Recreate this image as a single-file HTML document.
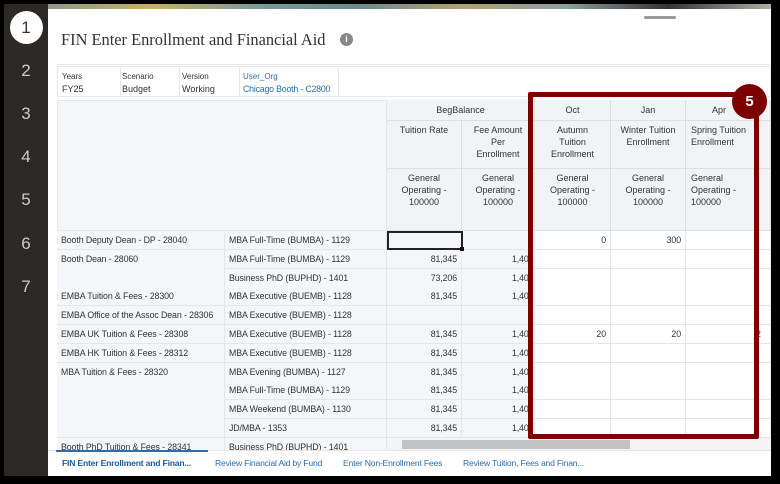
<!DOCTYPE html>
<html><head><style>
*{margin:0;padding:0;box-sizing:border-box}
body{width:780px;height:484px;background:#fff;position:relative;overflow:hidden;font-family:"Liberation Sans",sans-serif;font-size:9px;color:#333}
.a{position:absolute}
.num{position:absolute;left:0;width:48px;text-align:center;color:#cfcac4;font-size:17px}
.c{position:absolute;white-space:nowrap;overflow:hidden}
.hd{background:#f1f3f6;border-right:1px solid #dcdfe4;border-bottom:1px solid #dcdfe4;text-align:center;color:#333;font-size:9px;line-height:12px}
.cell{border-right:1px solid #e3e6ea;border-bottom:1px solid #e3e6ea;height:19px;line-height:18px;padding:0 4px;font-size:8.8px;letter-spacing:-0.1px}
.g{background:#f4f6f9}
.w{background:#fff}
.r{text-align:right}
</style></head><body>
<div class="a" style="left:0;top:0;width:780px;height:484px;background:#000"></div>
<div class="a" style="left:4px;top:4px;width:44px;height:472px;background:#2d2926"></div>
<div class="num" style="left:4px;top:11px;width:44px"><div style="margin:0 auto;width:33px;height:33px;border-radius:50%;background:#fff;color:#333;line-height:33px">1</div></div>
<div class="num" style="left:4px;top:61px;width:44px">2</div>
<div class="num" style="left:4px;top:104px;width:44px">3</div>
<div class="num" style="left:4px;top:147px;width:44px">4</div>
<div class="num" style="left:4px;top:190px;width:44px">5</div>
<div class="num" style="left:4px;top:234px;width:44px">6</div>
<div class="num" style="left:4px;top:277px;width:44px">7</div>
<div class="a" style="left:48px;top:4px;width:723px;height:472px;background:#fff"></div>
<div class="a" style="left:48px;top:4px;width:723px;height:5px;background:linear-gradient(90deg,#8a9a8a,#c8b060,#7a9a9a,#6a8a90,#b0a070,#8aa0a0,#333,#aab0a0)"></div>
<div class="a" style="left:644px;top:16px;width:32px;height:3px;border-radius:2px;background:#999"></div>
<div class="a" style="left:61px;top:30px;font-family:'Liberation Serif',serif;font-size:16.4px;color:#333">FIN Enter Enrollment and Financial Aid</div>
<div class="a" style="left:340px;top:33px;width:13px;height:13px;border-radius:50%;background:#888;color:#fff;font-size:9px;font-weight:bold;text-align:center;line-height:13px">i</div>
<div class="a" style="left:57px;top:64px;width:714px;height:1px;background:#e3e6ea"></div>
<div class="a" style="left:57px;top:66px;width:714px;height:31px;border:1px solid #e3e6ea"></div>
<div class="a" style="left:62px;top:71px;font-size:8px;line-height:12px">Years<br><span style="font-size:9px">FY25</span></div>
<div class="a" style="left:120px;top:67px;width:1px;height:29px;background:#e3e6ea"></div>
<div class="a" style="left:122px;top:71px;font-size:8px;line-height:12px">Scenario<br><span style="font-size:9px">Budget</span></div>
<div class="a" style="left:179px;top:67px;width:1px;height:29px;background:#e3e6ea"></div>
<div class="a" style="left:182px;top:71px;font-size:8px;line-height:12px">Version<br><span style="font-size:9px">Working</span></div>
<div class="a" style="left:239px;top:67px;width:1px;height:29px;background:#e3e6ea"></div>
<div class="a" style="left:243px;top:71px;font-size:8px;line-height:12px;color:#2a6fa8">User_Org<br><span style="font-size:8.8px;letter-spacing:-0.2px">Chicago Booth - C2800</span></div>
<div class="a" style="left:338px;top:67px;width:1px;height:29px;background:#e3e6ea"></div>
<div class="a" style="left:57px;top:100px;width:330px;height:131px;background:#f4f6f9;border:1px solid #e3e6ea"></div>
<div class="c hd" style="left:387px;top:100px;width:148px;height:21px;line-height:20px">BegBalance</div>
<div class="c hd" style="left:535px;top:100px;width:76px;height:21px;line-height:20px">Oct</div>
<div class="c hd" style="left:611px;top:100px;width:75px;height:21px;line-height:20px">Jan</div>
<div class="c hd" style="left:686px;top:100px;width:85px;height:21px;line-height:20px;text-align:left;padding-left:26px">Apr</div>
<div class="c hd" style="left:387px;top:121px;width:75px;height:48px;padding-top:3px">Tuition Rate</div>
<div class="c hd" style="left:462px;top:121px;width:73px;height:48px;padding-top:3px">Fee Amount<br>Per<br>Enrollment</div>
<div class="c hd" style="left:535px;top:121px;width:76px;height:48px;padding-top:3px">Autumn<br>Tuition<br>Enrollment</div>
<div class="c hd" style="left:611px;top:121px;width:75px;height:48px;padding-top:3px">Winter Tuition<br>Enrollment</div>
<div class="c hd" style="left:686px;top:121px;width:85px;height:48px;padding-top:3px;text-align:left;padding-left:5px">Spring Tuition<br>Enrollment</div>
<div class="c hd" style="left:387px;top:169px;width:75px;height:62px;padding-top:3px">General<br>Operating -<br>100000</div>
<div class="c hd" style="left:462px;top:169px;width:73px;height:62px;padding-top:3px">General<br>Operating -<br>100000</div>
<div class="c hd" style="left:535px;top:169px;width:76px;height:62px;padding-top:3px">General<br>Operating -<br>100000</div>
<div class="c hd" style="left:611px;top:169px;width:75px;height:62px;padding-top:3px">General<br>Operating -<br>100000</div>
<div class="c hd" style="left:686px;top:169px;width:85px;height:62px;padding-top:3px;text-align:left;padding-left:5px">General<br>Operating -<br>100000</div>
<div id="rows"></div>
<script>
var rows=[
["Booth Deputy Dean - DP - 28040","MBA Full-Time (BUMBA) - 1129","","","0","300"],
["Booth Dean - 28060","MBA Full-Time (BUMBA) - 1129","81,345","1,40","",""],
["","Business PhD (BUPHD) - 1401","73,206","1,40","",""],
["EMBA Tuition & Fees - 28300","MBA Executive (BUEMB) - 1128","81,345","1,40","",""],
["EMBA Office of the Assoc Dean - 28306","MBA Executive (BUEMB) - 1128","","","",""],
["EMBA UK Tuition & Fees - 28308","MBA Executive (BUEMB) - 1128","81,345","1,40","20","20"],
["EMBA HK Tuition & Fees - 28312","MBA Executive (BUEMB) - 1128","81,345","1,40","",""],
["MBA Tuition & Fees - 28320","MBA Evening (BUMBA) - 1127","81,345","1,40","",""],
["","MBA Full-Time (BUMBA) - 1129","81,345","1,40","",""],
["","MBA Weekend (BUMBA) - 1130","81,345","1,40","",""],
["","JD/MBA - 1353","81,345","1,40","",""],
["Booth PhD Tuition & Fees - 28341","Business PhD (BUPHD) - 1401","","","",""]];
var h="";
for(var i=0;i<rows.length;i++){var t=231+i*18.8,r=rows[i];
h+='<div class="c cell g" style="left:57px;top:'+t+'px;width:168px;overflow:visible;'+(i+1<rows.length&&rows[i+1][0]==""?"border-bottom-color:#f4f6f9;":"")+'">'+r[0]+'</div>';
h+='<div class="c cell g" style="left:225px;top:'+t+'px;width:162px">'+r[1]+'</div>';
h+='<div class="c cell g r" style="left:387px;top:'+t+'px;width:75px">'+r[2]+'</div>';
h+='<div class="c cell g" style="left:462px;top:'+t+'px;width:73px;padding-left:50px">'+r[3]+'</div>';
h+='<div class="c cell w r" style="left:535px;top:'+t+'px;width:76px">'+r[4]+'</div>';
h+='<div class="c cell w r" style="left:611px;top:'+t+'px;width:75px">'+r[5]+'</div>';
h+='<div class="c cell w" style="left:686px;top:'+t+'px;width:85px;padding-left:70px">'+(r[4]=="20"?"2":"")+'</div>';}
document.getElementById("rows").innerHTML=h;
</script>
<div class="a" style="left:387px;top:231px;width:76px;height:19px;border:2px solid #222"></div>
<div class="a" style="left:460px;top:247px;width:4px;height:4px;background:#111"></div>
<div class="a" style="left:387px;top:438px;width:384px;height:12px;background:#f4f4f4"></div>
<div class="a" style="left:402px;top:440px;width:228px;height:9px;background:#c2c2c2"></div>
<div class="a" style="left:48px;top:450px;width:723px;height:26px;background:#fff;border-top:1px solid #e3e6ea"></div>
<div class="a" style="left:56px;top:450px;width:152px;height:2px;background:#2a6fa8"></div>
<div class="a" style="left:62px;top:458px;font-size:8.6px;font-weight:bold;color:#1e5b94;letter-spacing:-0.2px">FIN Enter Enrollment and Finan...</div>
<div class="a" style="left:215px;top:458px;font-size:8.6px;color:#2a6fa8;letter-spacing:-0.2px">Review Financial Aid by Fund</div>
<div class="a" style="left:343px;top:458px;font-size:8.6px;color:#2a6fa8;letter-spacing:-0.2px">Enter Non-Enrollment Fees</div>
<div class="a" style="left:463px;top:458px;font-size:8.6px;color:#2a6fa8;letter-spacing:-0.2px">Review Tuition, Fees and Finan...</div>
<div class="a" style="left:528px;top:92px;width:231px;height:347px;border:5px solid #7d0000;border-radius:2px"></div>
<div class="a" style="left:732px;top:84px;width:35px;height:35px;border-radius:50%;background:#7d0000;color:#fff;font-weight:bold;font-size:15px;text-align:center;line-height:35px">5</div>
<div class="a" style="left:771px;top:4px;width:9px;height:480px;background:#000"></div>
<div class="a" style="left:0;top:476px;width:780px;height:8px;background:#000"></div>
</body></html>
